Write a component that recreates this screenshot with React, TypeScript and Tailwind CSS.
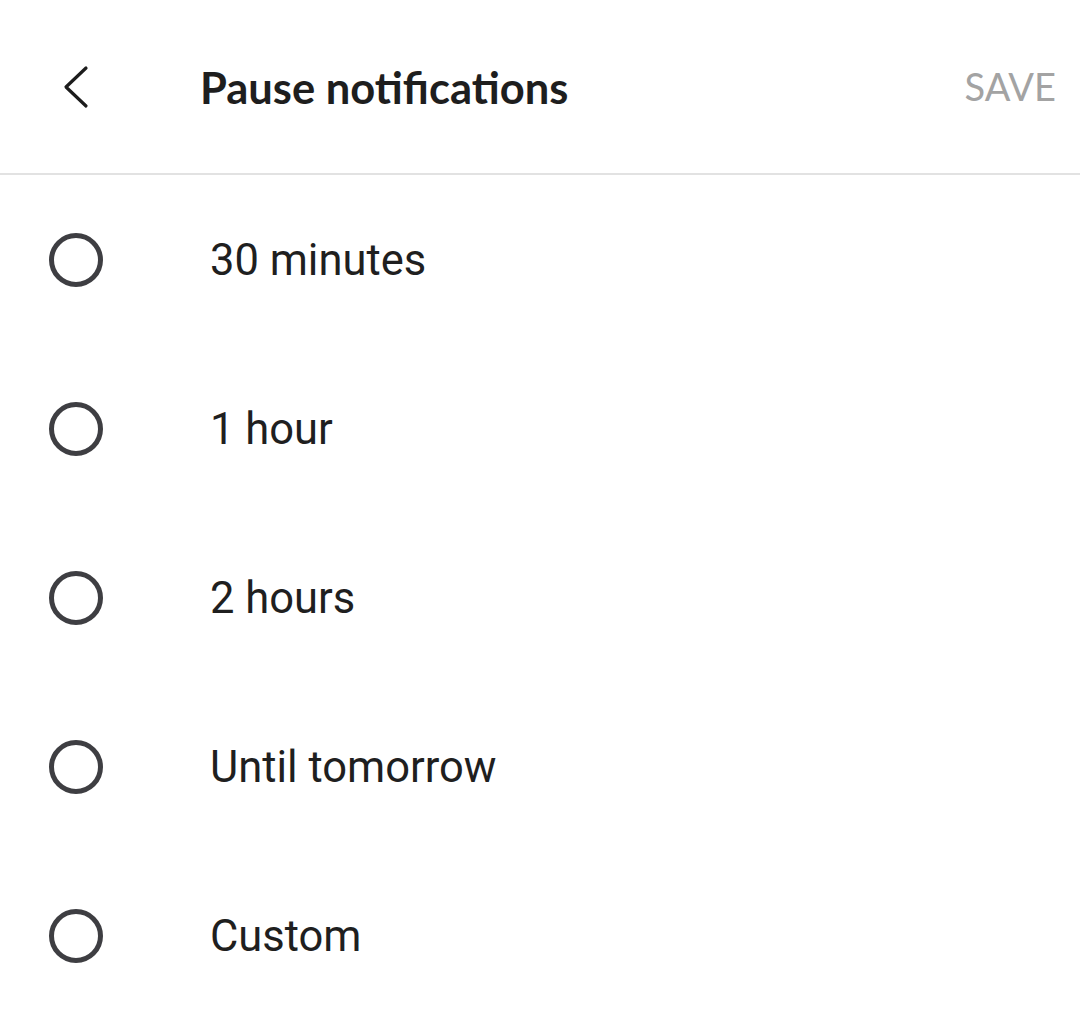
import { useState } from "react";

const options = ["30 minutes", "1 hour", "2 hours", "Until tomorrow", "Custom"];

export default function App() {
  const [selected, setSelected] = useState<number | null>(null);

  return (
    <div className="min-h-screen w-full bg-white">
      {/* Header */}
      <div className="flex h-[175px] items-center border-b-2 border-[#e2e2e2] pr-[24px]">
        <button aria-label="Back" className="ml-[62px] flex h-[44px] w-[30px] items-center justify-center">
          <svg viewBox="0 0 30 44" className="h-[44px] w-[30px]" fill="none" stroke="#1c1c1c" strokeWidth="3.2" strokeLinecap="round" strokeLinejoin="round">
            <path d="M24 3L4 22L24 41" />
          </svg>
        </button>
        <h1 className="ml-[108px] pt-[2px] text-[43.5px] font-bold text-[#1e1e1e] [font-family:Lato,'Liberation_Sans',sans-serif]">
          Pause notifications
        </h1>
        <button className="ml-auto text-[38px] text-[#a3a3a3] [font-family:Lato,'Liberation_Sans',sans-serif]">
          SAVE
        </button>
      </div>

      {/* Options */}
      <div className="flex flex-col">
        {options.map((o, i) => (
          <button
            key={o}
            onClick={() => setSelected(i)}
            className="flex h-[169px] items-center pl-[49px] text-left"
          >
            <span className="flex h-[54px] w-[54px] items-center justify-center rounded-full border-[5px] border-[#3e3e42]">
              {selected === i && <span className="h-[26px] w-[26px] rounded-full bg-[#3e3e42]" />}
            </span>
            <span className="ml-[107px] pt-[3px] text-[43.5px] text-[#1f1f1f] [font-family:Roboto,'Liberation_Sans',sans-serif]">
              {o}
            </span>
          </button>
        ))}
      </div>
    </div>
  );
}
